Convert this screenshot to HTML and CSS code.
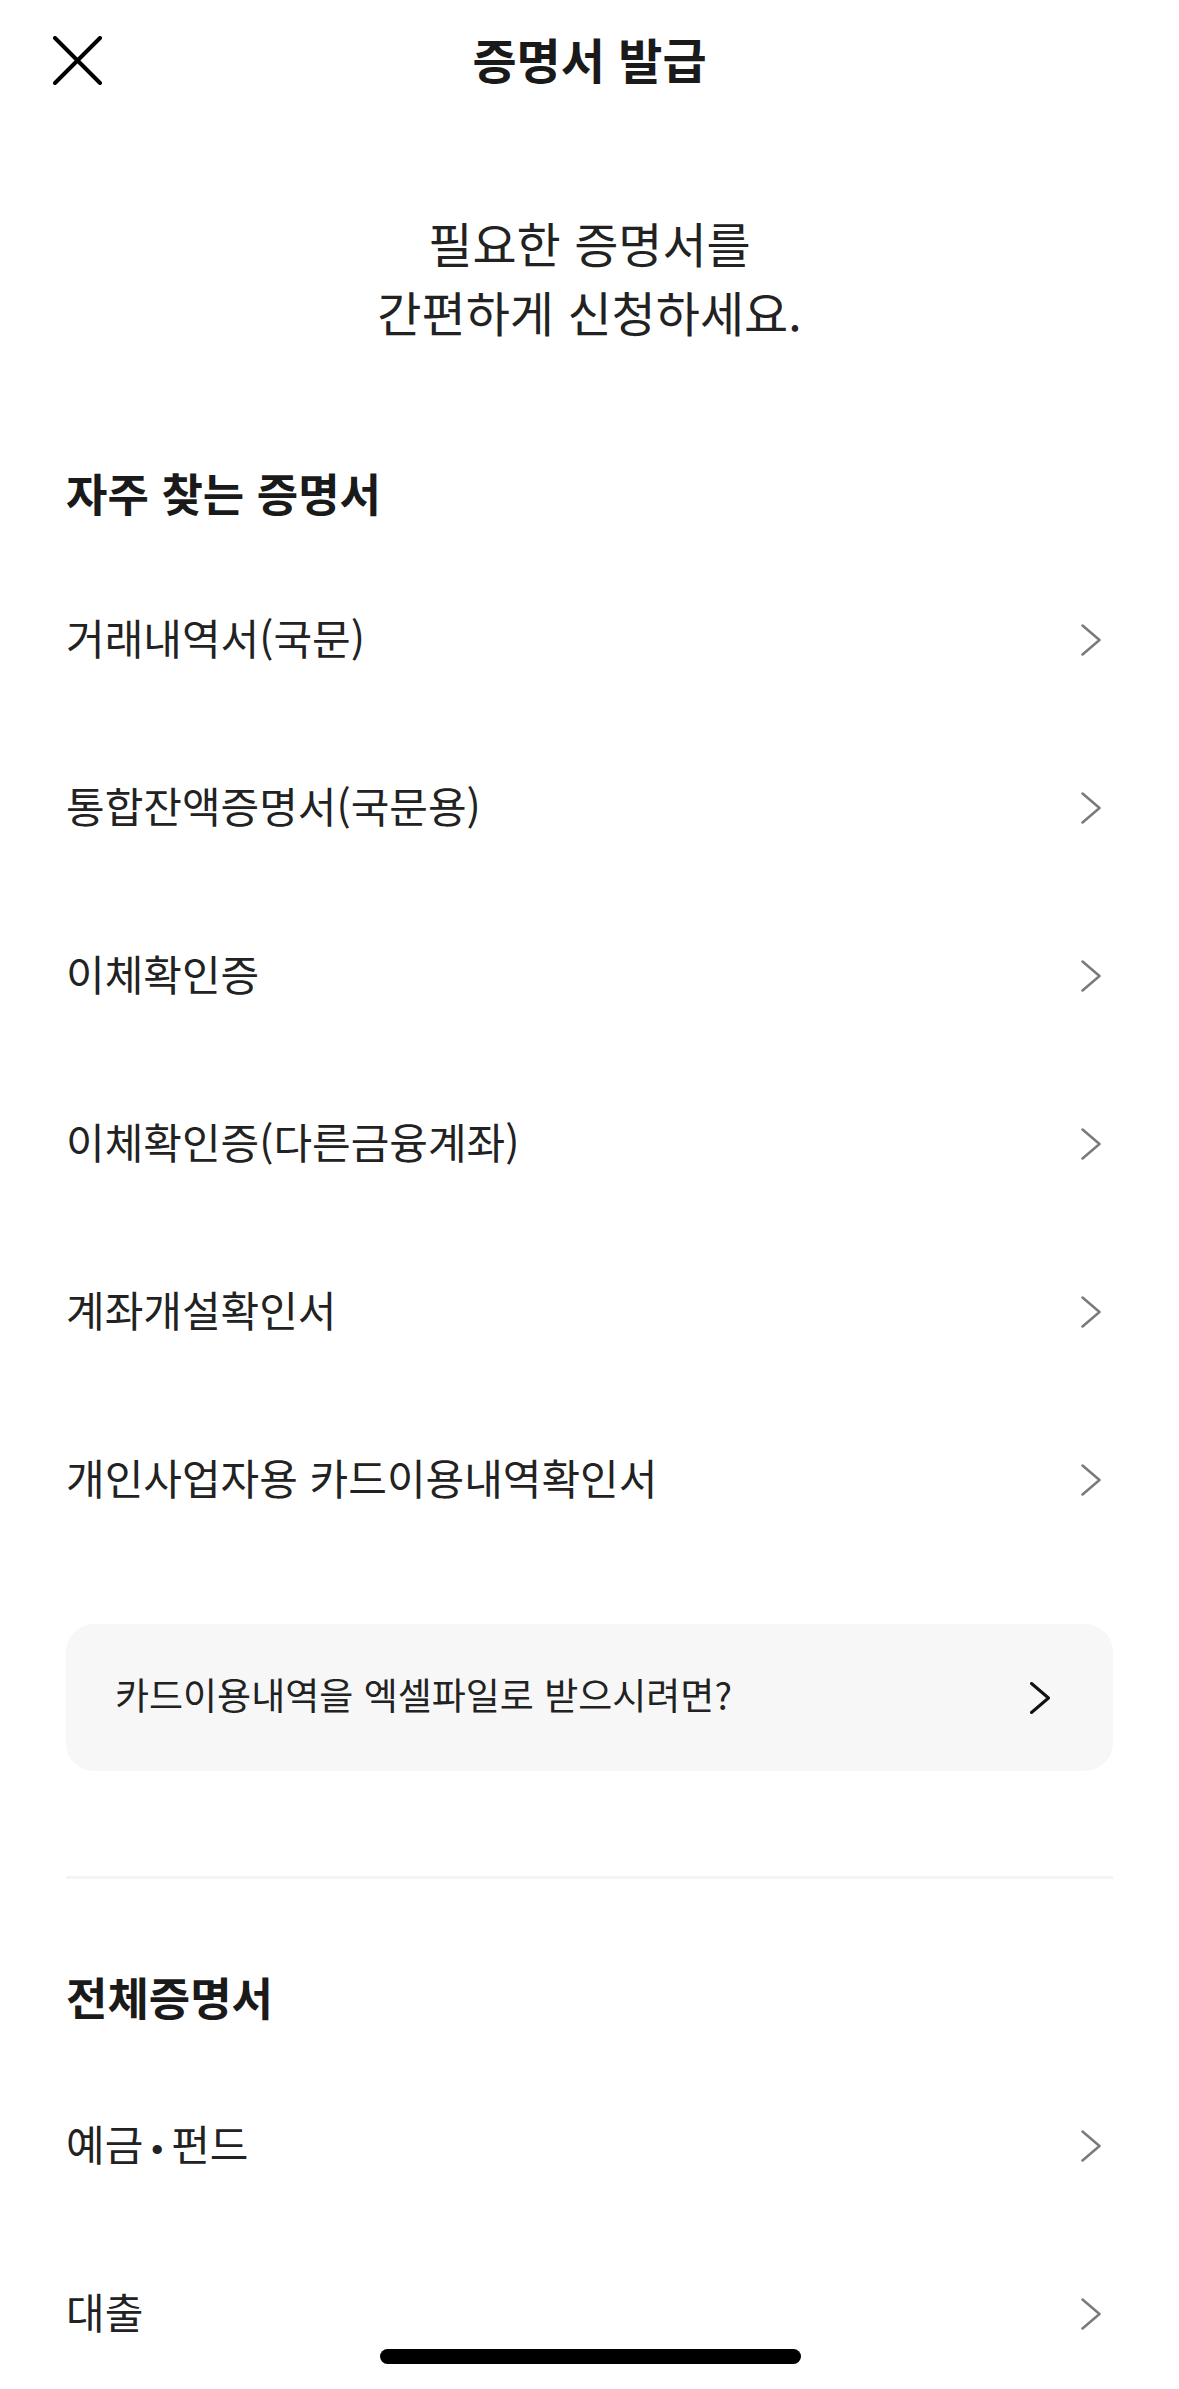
FILE: index.html
```html
<!DOCTYPE html>
<html lang="ko">
  <head>
    <meta charset="UTF-8">
    <meta name="viewport" content="width=device-width, initial-scale=1.0"/>
    <title>증명서 발급</title>
    <link rel="stylesheet" href="styles.css">
  </head>
  <body>
    <header class="topbar">
      <button class="close" aria-label="닫기">
        <svg width="49" height="49" viewBox="0 0 49 49">
          <path d="M2 2 L47 47 M47 2 L2 47" stroke="#000" stroke-width="4" stroke-linecap="round"/>
        </svg>
      </button>
      <h1 class="title">증명서 발급</h1>
      <span></span>
    </header>

    <main class="content">
      <p class="intro">필요한 증명서를<br>간편하게 신청하세요.</p>

      <section class="group">
        <h2 class="group-title">자주 찾는 증명서</h2>
        <ul class="cert-list">
          <li><a href="#" class="cert-item"><span class="label">거래내역서(국문)</span><svg class="chev" width="20" height="32" viewBox="0 0 20 32"><polyline points="1.5,1.5 18.5,16 1.5,30.5"/></svg></a></li>
          <li><a href="#" class="cert-item"><span class="label">통합잔액증명서(국문용)</span><svg class="chev" width="20" height="32" viewBox="0 0 20 32"><polyline points="1.5,1.5 18.5,16 1.5,30.5"/></svg></a></li>
          <li><a href="#" class="cert-item"><span class="label">이체확인증</span><svg class="chev" width="20" height="32" viewBox="0 0 20 32"><polyline points="1.5,1.5 18.5,16 1.5,30.5"/></svg></a></li>
          <li><a href="#" class="cert-item"><span class="label">이체확인증(다른금융계좌)</span><svg class="chev" width="20" height="32" viewBox="0 0 20 32"><polyline points="1.5,1.5 18.5,16 1.5,30.5"/></svg></a></li>
          <li><a href="#" class="cert-item"><span class="label">계좌개설확인서</span><svg class="chev" width="20" height="32" viewBox="0 0 20 32"><polyline points="1.5,1.5 18.5,16 1.5,30.5"/></svg></a></li>
          <li><a href="#" class="cert-item"><span class="label">개인사업자용 카드이용내역확인서</span><svg class="chev" width="20" height="32" viewBox="0 0 20 32"><polyline points="1.5,1.5 18.5,16 1.5,30.5"/></svg></a></li>
        </ul>
        <a href="#" class="excel-card">
          <span class="label">카드이용내역을 엑셀파일로 받으시려면?</span>
          <svg class="chev dark" width="20" height="32" viewBox="0 0 20 32"><polyline points="1.5,1.5 18.5,16 1.5,30.5"/></svg>
        </a>
      </section>

      <hr class="divider">

      <section class="group">
        <h2 class="group-title all">전체증명서</h2>
        <ul class="cert-list all">
          <li><a href="#" class="cert-item"><span class="label">예금<span class="dot">•</span>펀드</span><svg class="chev" width="20" height="32" viewBox="0 0 20 32"><polyline points="1.5,1.5 18.5,16 1.5,30.5"/></svg></a></li>
          <li><a href="#" class="cert-item"><span class="label">대출</span><svg class="chev" width="20" height="32" viewBox="0 0 20 32"><polyline points="1.5,1.5 18.5,16 1.5,30.5"/></svg></a></li>
        </ul>
      </section>
    </main>

    <div class="home-bar"></div>
  </body>
</html>
```

FILE: styles.css
```css
html, body {
  margin: 0;
  height: 100%;
  overflow: hidden;
}
body {
  background-color: #fff;
  color: #222;
  font-family: "Noto Sans CJK KR", "Noto Sans", sans-serif;
}
.topbar {
  display: grid;
  grid-template-columns: 1fr auto 1fr;
  align-items: center;
  height: 120px;
  padding: 0 53px;
}
.close {
  justify-self: start;
  background: transparent;
  border: none;
  padding: 0;
  display: flex;
}
.title {
  margin: 0 0 4px;
  font-size: 48px;
  font-weight: 700;
  color: #1a1a1a;
}
.content {
  padding: 0 66px;
}
.intro {
  margin: 88px 0 0;
  text-align: center;
  font-size: 48px;
  line-height: 69px;
  color: #222;
}
.group-title {
  margin: 117px 0 0;
  font-size: 45px;
  line-height: 60px;
  font-weight: 700;
  color: #1a1a1a;
}
.group-title.all {
  margin-top: 88px;
}
.cert-list {
  list-style-type: none;
  margin: 33px 0 0;
  padding: 0;
}
.cert-list.all {
  margin-top: 35px;
}
.cert-item {
  display: flex;
  align-items: center;
  justify-content: space-between;
  height: 168px;
  padding-right: 12px;
  text-decoration: none;
  color: #222;
  font-size: 42px;
}
.label {
  padding-bottom: 8px;
}
.dot {
  margin: 0 8px;
  font-family: "Liberation Sans", sans-serif;
  font-size: 34px;
}
.chev polyline {
  fill: none;
  stroke: #7a7a7a;
  stroke-width: 2.5;
  stroke-linecap: round;
  stroke-linejoin: round;
}
.chev.dark polyline {
  stroke: #111;
  stroke-width: 3;
}
.excel-card {
  display: flex;
  align-items: center;
  justify-content: space-between;
  height: 147px;
  margin-top: 60px;
  padding: 0 63px 0 49px;
  border-radius: 28px;
  background-color: #f7f7f7;
  text-decoration: none;
  color: #222;
  font-size: 37px;
}
.divider {
  height: 3px;
  margin: 105px 0 0;
  border: none;
  background-color: #f4f4f4;
}
.home-bar {
  position: fixed;
  left: 50%;
  bottom: 25px;
  width: 421px;
  height: 15px;
  margin-left: -210px;
  border-radius: 8px;
  background-color: #000;
}
```
